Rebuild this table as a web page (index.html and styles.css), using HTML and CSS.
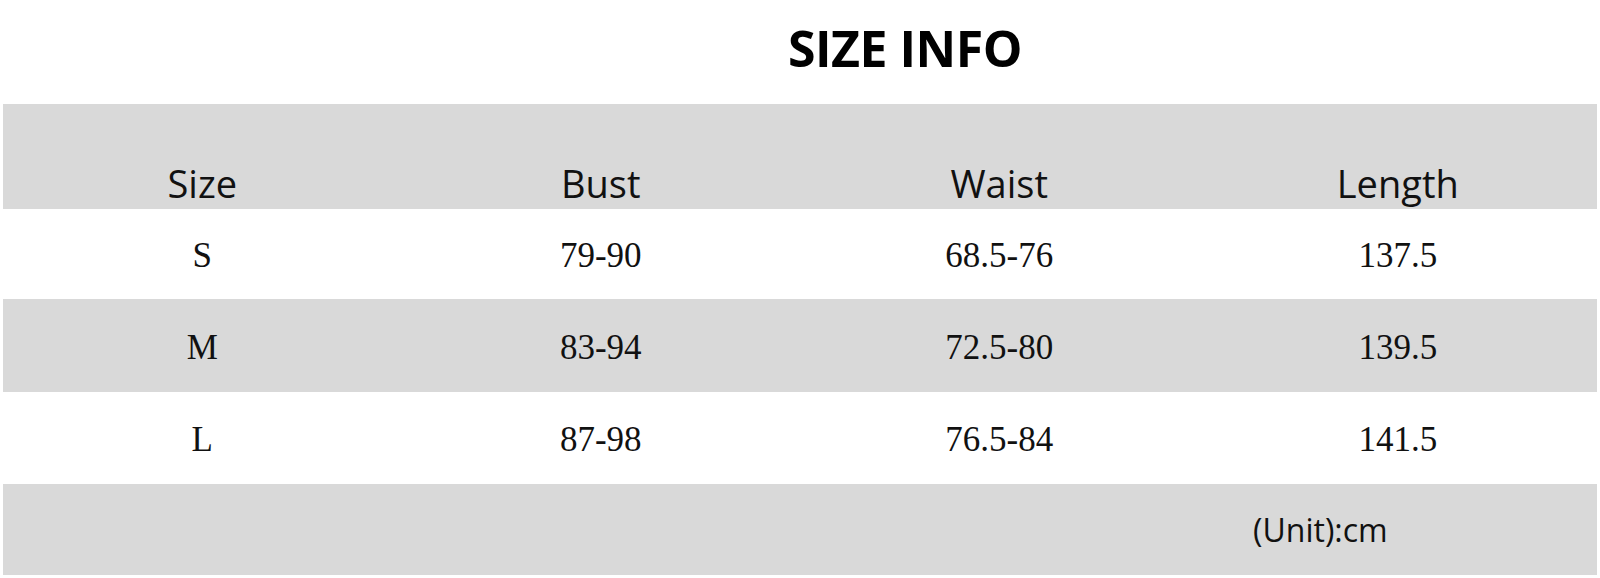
FILE: index.html
```html
<!DOCTYPE html>
<html>
<head>
<meta charset="utf-8">
<link rel="stylesheet" href="styles.css">
</head>
<body>
<div class="page">
  <h1 class="title">SIZE INFO</h1>
  <div class="table">
    <div class="row head">
      <div class="cell">Size</div>
      <div class="cell">Bust</div>
      <div class="cell">Waist</div>
      <div class="cell">Length</div>
    </div>
    <div class="row data white r1">
      <div class="cell">S</div>
      <div class="cell">79-90</div>
      <div class="cell">68.5-76</div>
      <div class="cell">137.5</div>
    </div>
    <div class="row data gray r2">
      <div class="cell">M</div>
      <div class="cell">83-94</div>
      <div class="cell">72.5-80</div>
      <div class="cell">139.5</div>
    </div>
    <div class="row data white r3">
      <div class="cell">L</div>
      <div class="cell">87-98</div>
      <div class="cell">76.5-84</div>
      <div class="cell">141.5</div>
    </div>
    <div class="row foot">
      <div class="unit">(Unit):cm</div>
    </div>
  </div>
</div>
</body>
</html>
```

FILE: styles.css
```css
html, body {
  margin: 0;
  padding: 0;
  background: #ffffff;
}

.page {
  width: 1600px;
  height: 578px;
  overflow: hidden;
}

.title {
  margin: 0;
  height: 104px;
  box-sizing: border-box;
  padding-top: 24px;
  padding-left: 788px;
  text-align: left;
  font-family: "Open Sans", "Noto Sans", sans-serif;
  font-weight: 700;
  font-size: 50px;
  line-height: 48px;
  letter-spacing: -0.5px;
  color: #000;
}

.table {
  margin: 0 3px;
  display: flex;
  flex-direction: column;
}

.row {
  display: grid;
  grid-template-columns: repeat(4, 1fr);
}

.cell {
  text-align: center;
}

.head {
  height: 105px;
  background: #d9d9d9;
  align-items: end;
  box-sizing: border-box;
  padding-bottom: 7px;
  font-family: "Open Sans", "Noto Sans", sans-serif;
  font-size: 38px;
  line-height: 38px;
  color: #111;
}

.data {
  align-items: center;
  font-family: "Liberation Serif", "Times New Roman", serif;
  font-size: 35px;
  line-height: 35px;
  color: #111;
}

.r1 { height: 90px; padding-top: 2px; box-sizing: border-box; }
.r2 { height: 93px; padding-top: 3px; box-sizing: border-box; }
.r3 { height: 92px; padding-top: 2px; box-sizing: border-box; }

.white { background: #ffffff; }
.gray { background: #d9d9d9; }

.foot {
  height: 91px;
  background: #d9d9d9;
  display: flex;
  align-items: center;
  font-family: "Open Sans", "Noto Sans", sans-serif;
  font-size: 32px;
  line-height: 32px;
  color: #111;
}

.unit {
  margin-left: 1250px;
}
```
